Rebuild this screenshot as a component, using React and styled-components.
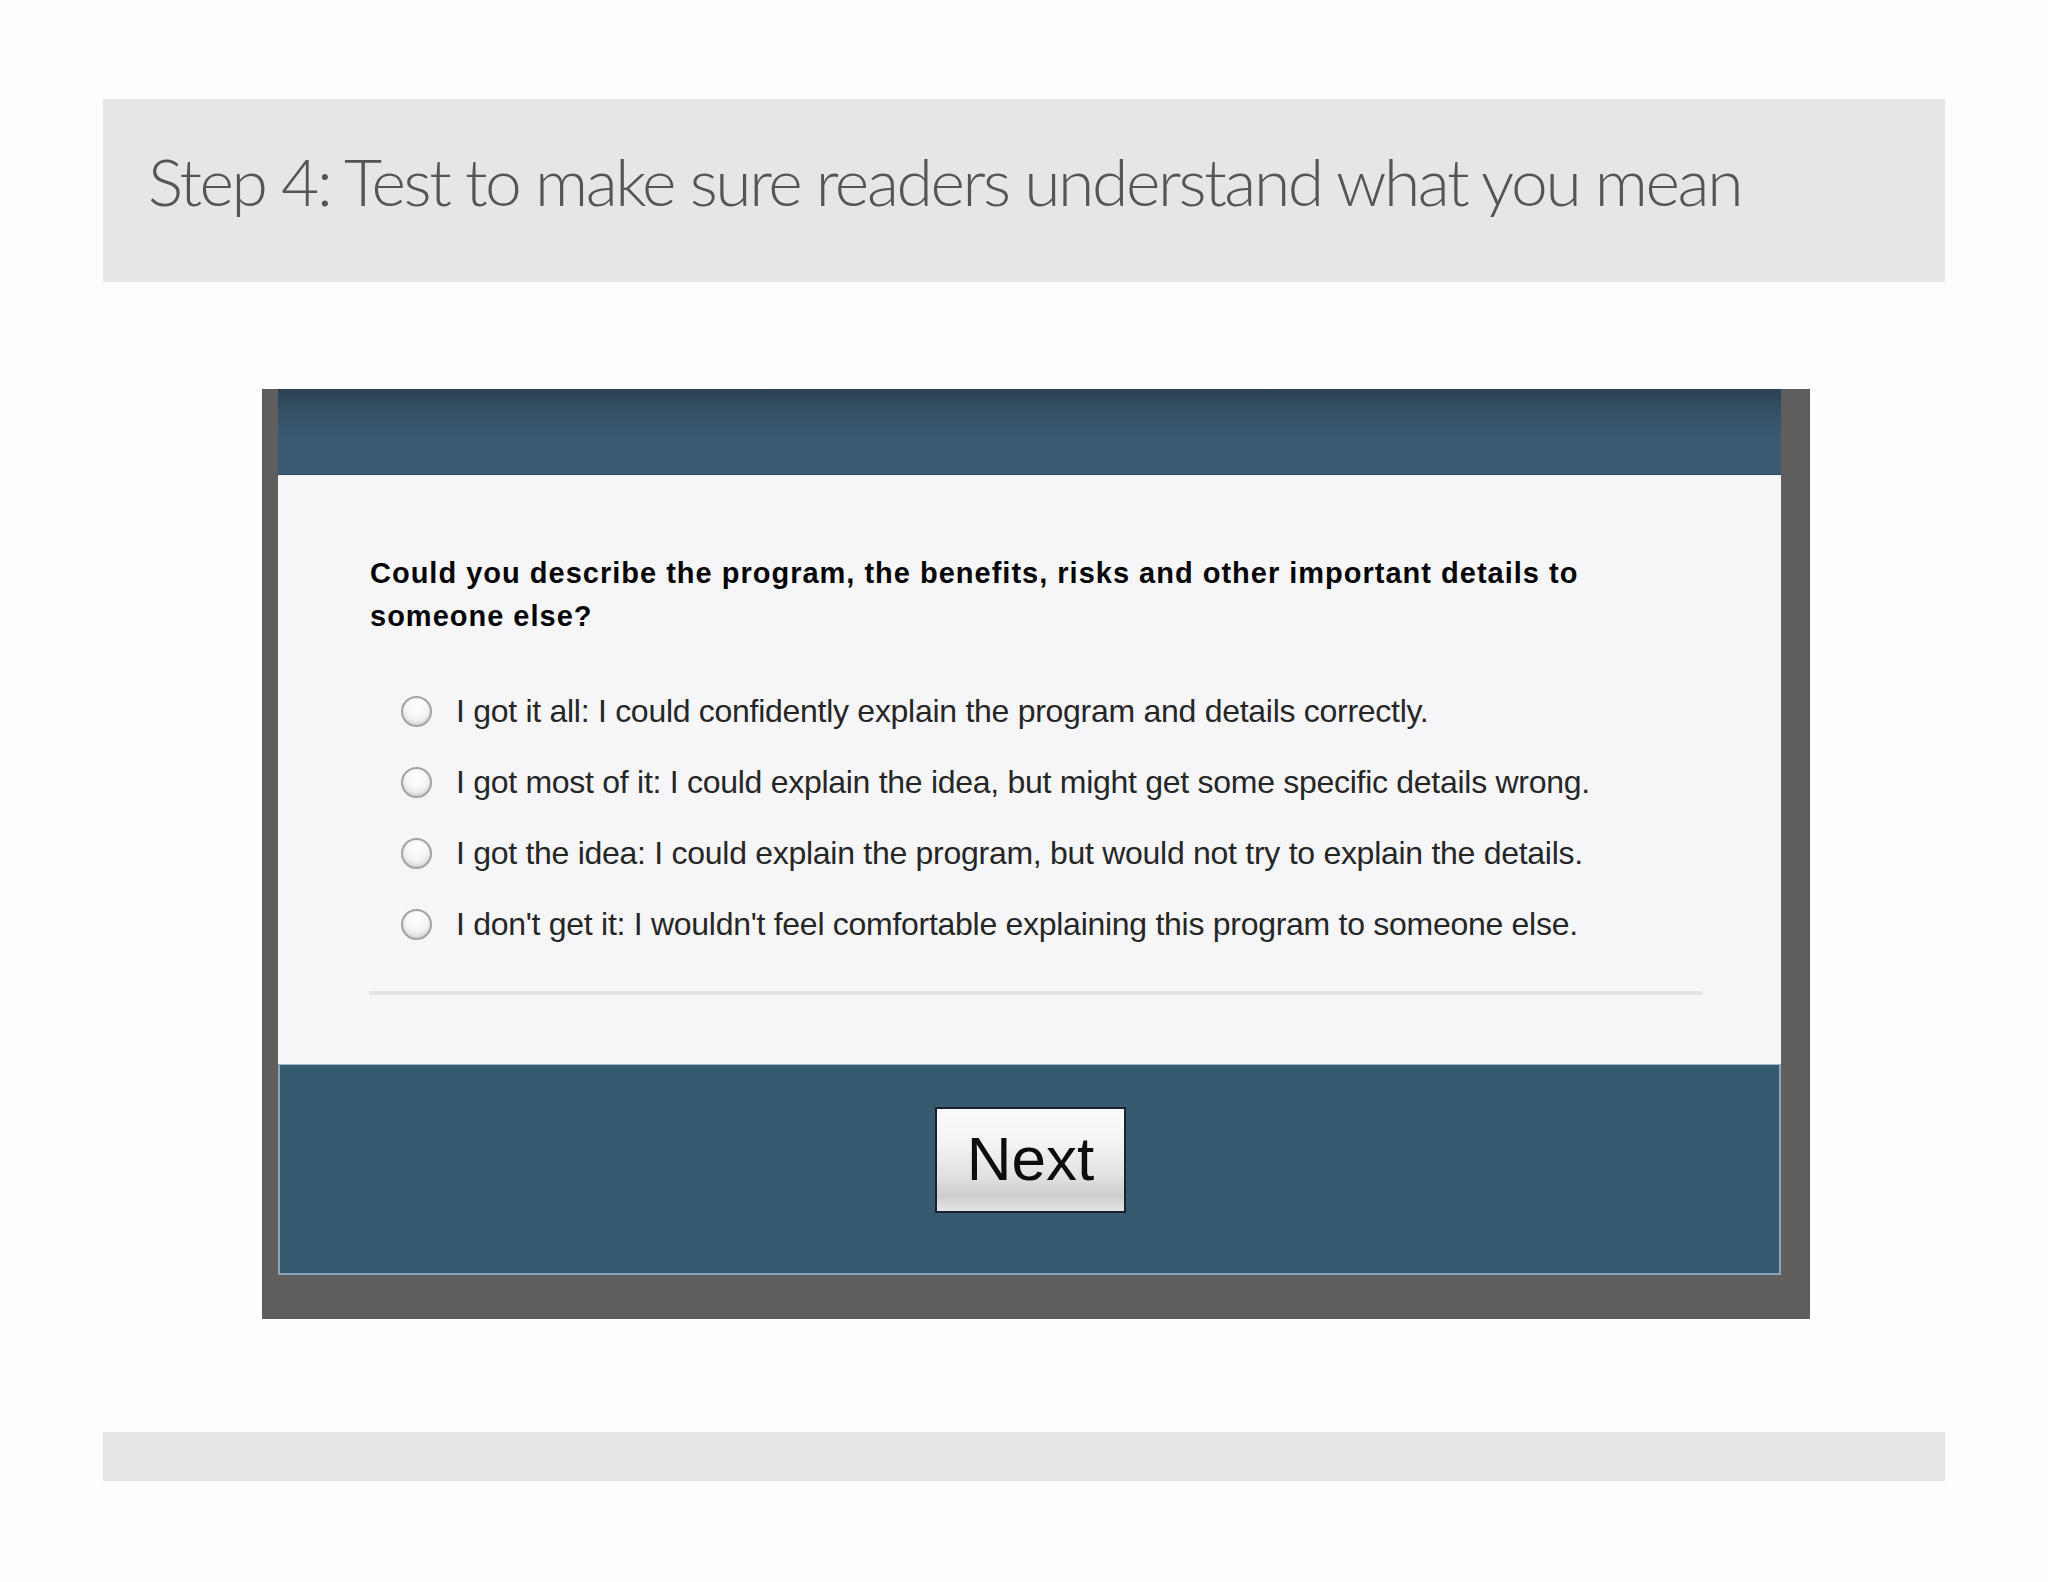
import React from "react";
import styled, { createGlobalStyle } from "styled-components";

const Global = createGlobalStyle`
  html, body { margin: 0; padding: 0; background: #fdfdfd; }
  body { font-family: "Liberation Sans", Arial, sans-serif; }
`;

const Page = styled.div`
  width: 1842px;
  margin-left: 103px;
  padding-top: 99px;
  display: flex;
  flex-direction: column;
`;

const TitleBar = styled.header`
  height: 183px;
  background: #e6e6e6;
  display: flex;
  align-items: center;
  padding-left: 45px;
  box-sizing: border-box;
`;

const Title = styled.h1`
  margin: 0;
  font-family: Lato, "Open Sans", sans-serif;
  font-weight: 300;
  font-size: 66px;
  letter-spacing: -2.4px;
  color: #555555;
  line-height: 1;
  position: relative;
  top: -10px;
`;

const Frame = styled.div`
  margin-top: 107px;
  margin-left: 159px;
  width: 1548px;
  box-sizing: border-box;
  background: #5f5e5d;
  padding: 0 29px 44px 16px;
`;

const Screen = styled.div`
  display: flex;
  flex-direction: column;
`;

const TopBand = styled.div`
  height: 86px;
  background: linear-gradient(#2b4254 0%, #375469 35%, #3a5a73 60%, #3a5a73 100%);
  border-bottom: 1px solid #2f4a5f;
  box-sizing: border-box;
`;

const Content = styled.div`
  height: 589px;
  box-sizing: border-box;
  background: #f6f6f8;
  padding: 77px 79px 0 92px;
  display: flex;
  flex-direction: column;
`;

const Question = styled.p`
  margin: 0;
  font-family: "Liberation Sans", Arial, sans-serif;
  font-weight: 700;
  font-size: 29px;
  letter-spacing: 1px;
  line-height: 43px;
  color: #050505;
`;

const Options = styled.div`
  margin-top: 38px;
  display: flex;
  flex-direction: column;
`;

const OptionRow = styled.label`
  height: 71px;
  display: flex;
  align-items: center;
  padding-left: 31px;
`;

const Radio = styled.span`
  width: 31px;
  height: 31px;
  box-sizing: border-box;
  border-radius: 50%;
  border: 2px solid #a3a3a5;
  background: radial-gradient(circle at 50% 30%, #ffffff 0%, #f6f6f6 45%, #dcdcdc 100%);
  box-shadow: inset 0 -2px 3px rgba(0, 0, 0, 0.08);
  flex-shrink: 0;
`;

const OptionText = styled.span`
  margin-left: 24px;
  font-family: "Liberation Sans", Arial, sans-serif;
  font-size: 32px;
  letter-spacing: -0.28px;
  line-height: 71px;
  color: #262626;
  white-space: nowrap;
`;

const Divider = styled.hr`
  margin: 31px 0 0 -1px;
  border: none;
  height: 4px;
  background: #e3e2e5;
`;

const BottomBand = styled.div`
  height: 211px;
  box-sizing: border-box;
  background: #365b71;
  border: 2px solid #8ea3b3;
  border-top: 1px solid #a9b7c2;
  display: flex;
  justify-content: center;
  align-items: flex-start;
  padding-top: 42px;
`;

const NextButton = styled.button`
  width: 191px;
  height: 106px;
  box-sizing: border-box;
  border: 2px solid #17232e;
  background: linear-gradient(#fbfbfb 0%, #f3f3f3 35%, #e2e2e2 65%, #cdcdcd 85%, #e4e4e4 100%);
  font-family: "Liberation Sans", Arial, sans-serif;
  font-size: 62px;
  color: #0d0d0d;
  padding: 0 0 4px;
  margin-left: 2px;
  cursor: pointer;
`;

const FooterBar = styled.div`
  margin-top: 113px;
  height: 49px;
  background: #e6e5e6;
`;

const options = [
  "I got it all: I could confidently explain the program and details correctly.",
  "I got most of it: I could explain the idea, but might get some specific details wrong.",
  "I got the idea: I could explain the program, but would not try to explain the details.",
  "I don't get it: I wouldn't feel comfortable explaining this program to someone else.",
];

export default function App() {
  return (
    <>
      <Global />
      <Page>
        <TitleBar>
          <Title>Step 4: Test to make sure readers understand what you mean</Title>
        </TitleBar>
        <Frame>
          <Screen>
            <TopBand />
            <Content>
              <Question>
                Could you describe the program, the benefits, risks and other important details to
                <br />
                someone else?
              </Question>
              <Options>
                {options.map((o) => (
                  <OptionRow key={o}>
                    <Radio />
                    <OptionText>{o}</OptionText>
                  </OptionRow>
                ))}
              </Options>
              <Divider />
            </Content>
            <BottomBand>
              <NextButton>Next</NextButton>
            </BottomBand>
          </Screen>
        </Frame>
        <FooterBar />
      </Page>
    </>
  );
}
